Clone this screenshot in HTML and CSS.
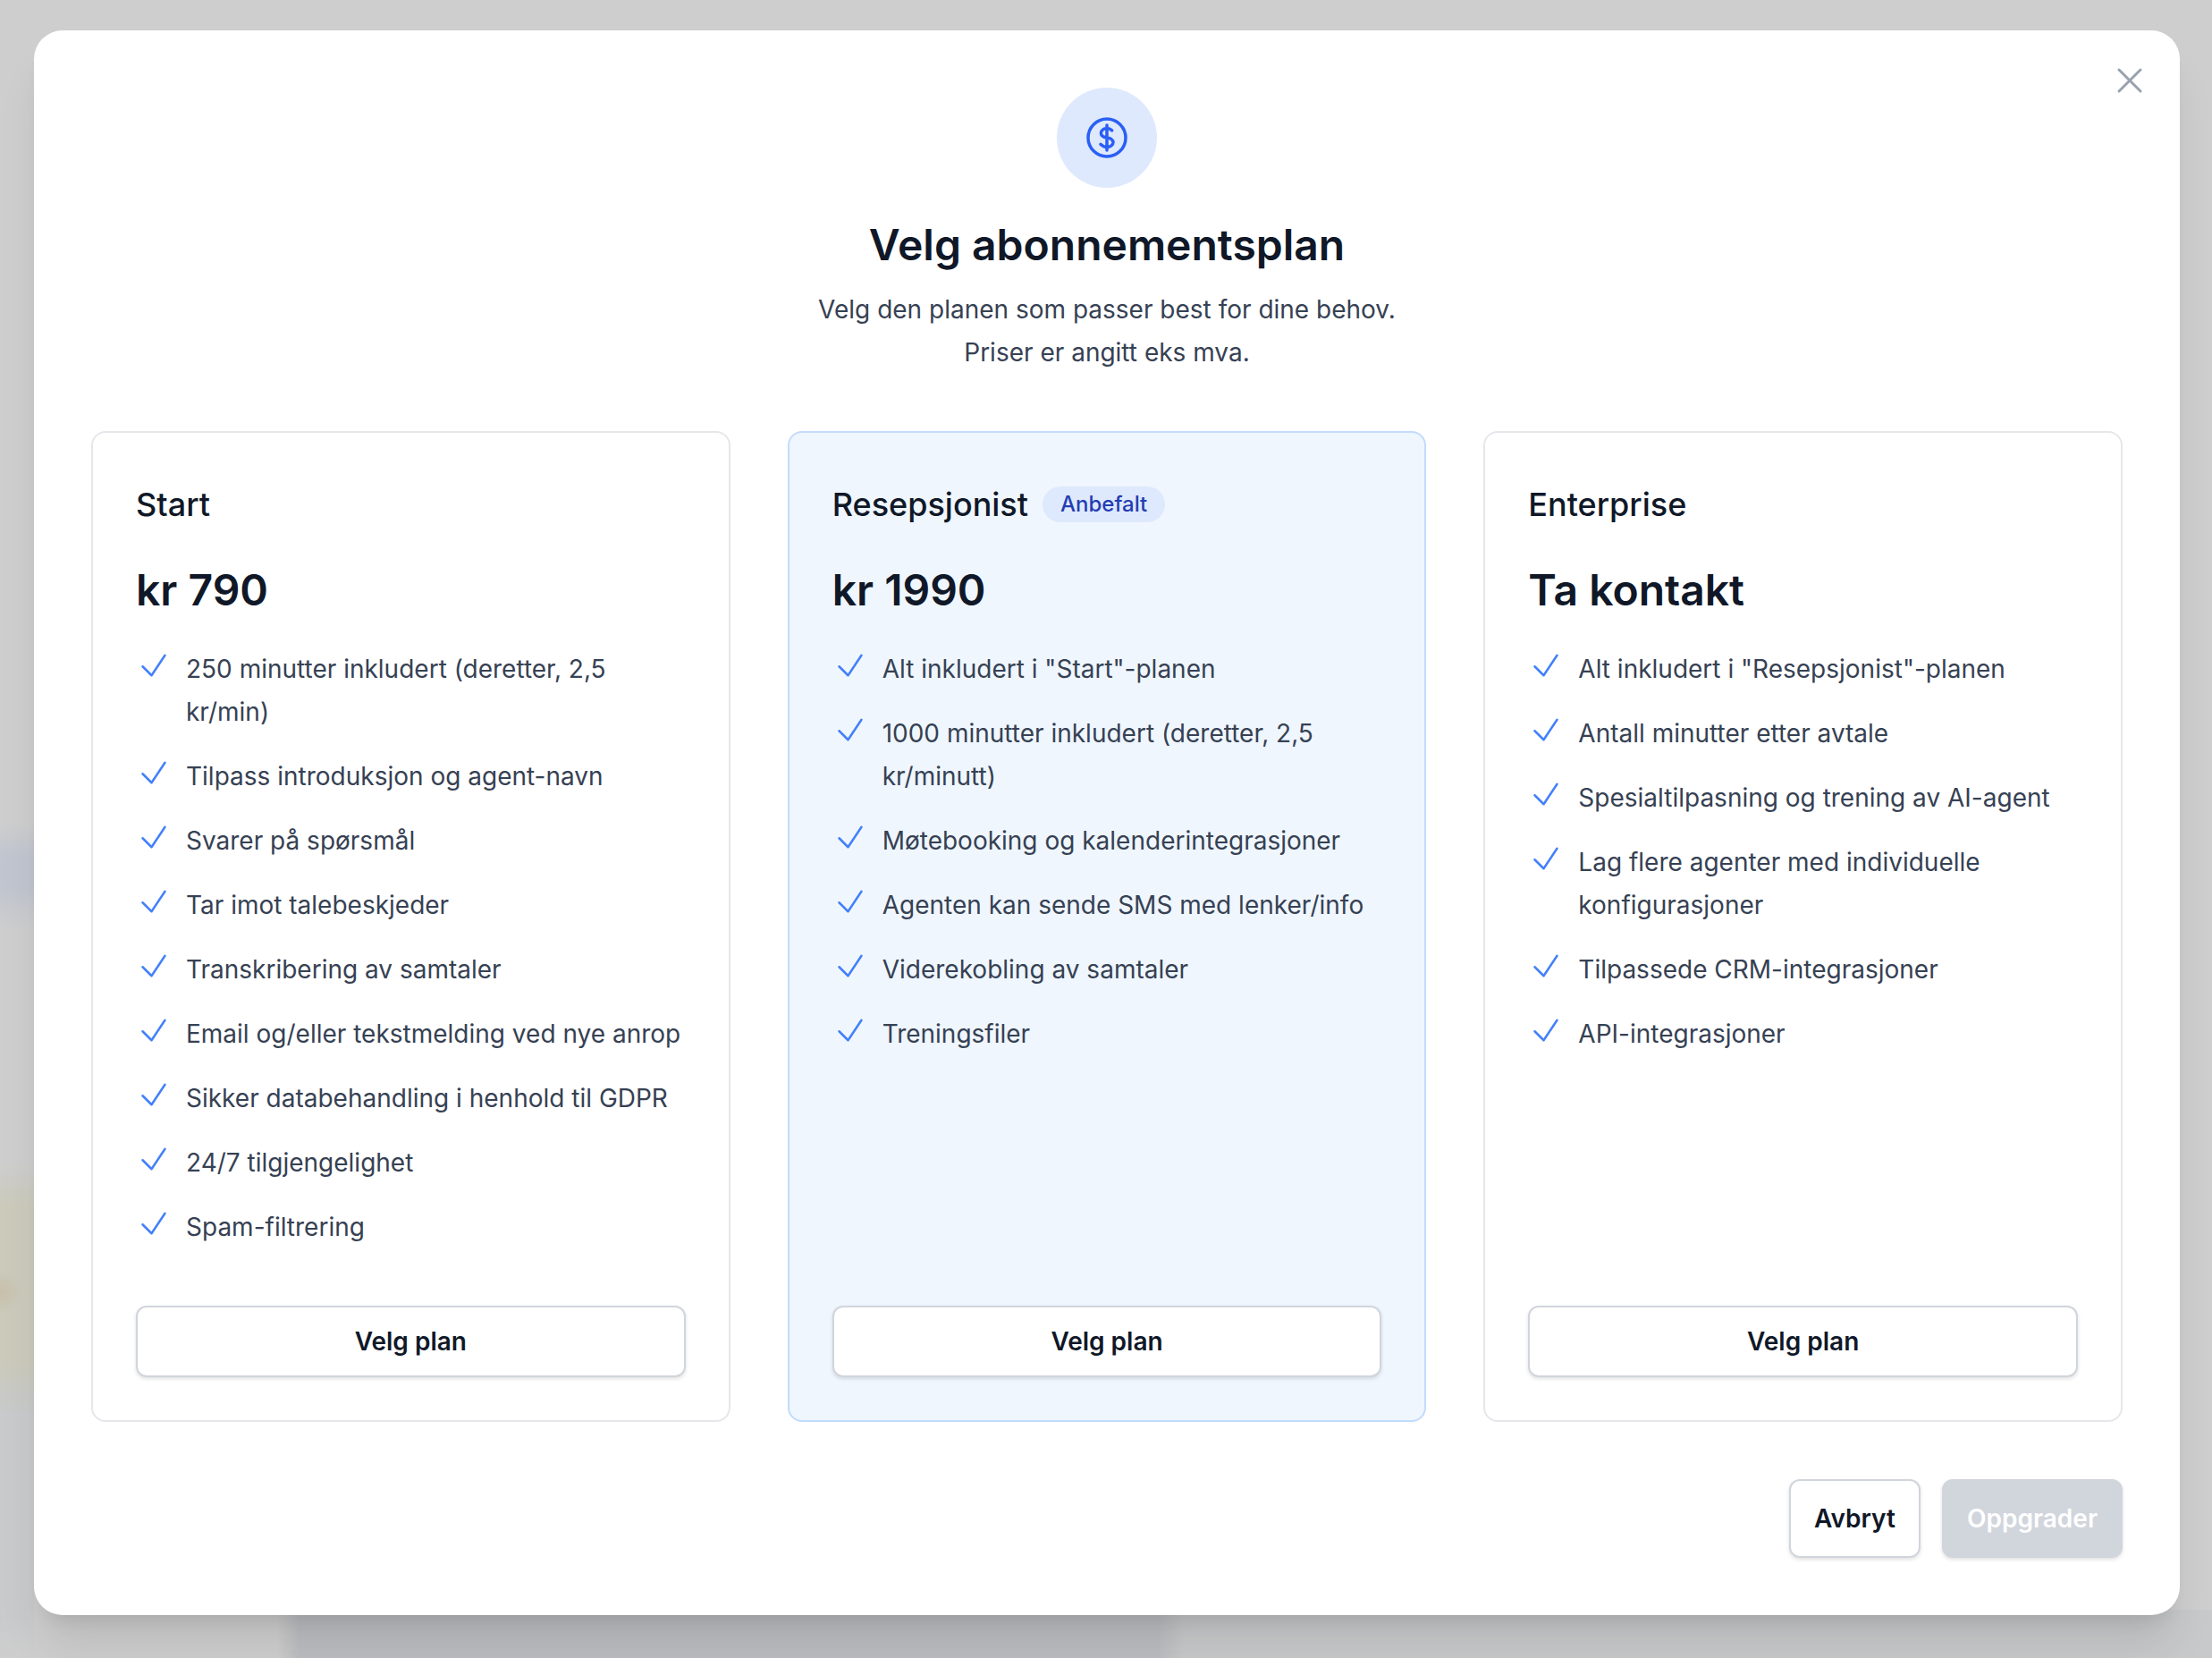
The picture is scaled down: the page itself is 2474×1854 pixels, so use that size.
FILE: index.html
```html
<!DOCTYPE html>
<html lang="no">
<head>
    <meta charset="UTF-8">
    <meta name="viewport" content="width=device-width, initial-scale=1.0">
    <title>Velg abonnementsplan</title>
    <link rel="stylesheet" href="styles.css">
</head>
<body>
    <svg class="sprite" aria-hidden="true">
        <symbol id="check" viewBox="0 0 24 24">
            <path d="M4.5 12.75l6 6 9-13.5" />
        </symbol>
    </svg>

    <div class="backdrop">
        <div class="modal" role="dialog" aria-modal="true" aria-labelledby="modal-title">
            <button type="button" class="close" aria-label="Lukk">
                <svg viewBox="0 0 24 24"><path d="M6 18L18 6M6 6l12 12" /></svg>
            </button>

            <div class="header">
                <div class="header-icon">
                    <svg viewBox="0 0 24 24">
                        <path d="M12 6v12m-3-2.818l.879.659c1.171.879 3.07.879 4.242 0 1.172-.879 1.172-2.303 0-3.182C13.536 12.219 12.768 12 12 12c-.725 0-1.45-.22-2.003-.659-1.106-.879-1.106-2.303 0-3.182s2.9-.879 4.006 0l.415.33M21 12a9 9 0 11-18 0 9 9 0 0118 0z" />
                    </svg>
                </div>
                <h1 id="modal-title">Velg abonnementsplan</h1>
                <p>Velg den planen som passer best for dine behov.<br>Priser er angitt eks mva.</p>
            </div>

            <div class="plans">
                <div class="plan">
                    <h2 class="plan-name">Start</h2>
                    <p class="price">kr 790</p>
                    <ul class="features">
                        <li><svg><use href="#check" /></svg>250 minutter inkludert (deretter, 2,5 kr/min)</li>
                        <li><svg><use href="#check" /></svg>Tilpass introduksjon og agent-navn</li>
                        <li><svg><use href="#check" /></svg>Svarer på spørsmål</li>
                        <li><svg><use href="#check" /></svg>Tar imot talebeskjeder</li>
                        <li><svg><use href="#check" /></svg>Transkribering av samtaler</li>
                        <li><svg><use href="#check" /></svg>Email og/eller tekstmelding ved nye anrop</li>
                        <li><svg><use href="#check" /></svg>Sikker databehandling i henhold til GDPR</li>
                        <li><svg><use href="#check" /></svg>24/7 tilgjengelighet</li>
                        <li><svg><use href="#check" /></svg>Spam-filtrering</li>
                    </ul>
                    <button type="button" class="button">Velg plan</button>
                </div>

                <div class="plan recommended">
                    <h2 class="plan-name">Resepsjonist <span class="badge">Anbefalt</span></h2>
                    <p class="price">kr 1990</p>
                    <ul class="features">
                        <li><svg><use href="#check" /></svg>Alt inkludert i "Start"-planen</li>
                        <li><svg><use href="#check" /></svg>1000 minutter inkludert (deretter, 2,5 kr/minutt)</li>
                        <li><svg><use href="#check" /></svg>Møtebooking og kalenderintegrasjoner</li>
                        <li><svg><use href="#check" /></svg>Agenten kan sende SMS med lenker/info</li>
                        <li><svg><use href="#check" /></svg>Viderekobling av samtaler</li>
                        <li><svg><use href="#check" /></svg>Treningsfiler</li>
                    </ul>
                    <button type="button" class="button">Velg plan</button>
                </div>

                <div class="plan">
                    <h2 class="plan-name">Enterprise</h2>
                    <p class="price">Ta kontakt</p>
                    <ul class="features">
                        <li><svg><use href="#check" /></svg>Alt inkludert i "Resepsjonist"-planen</li>
                        <li><svg><use href="#check" /></svg>Antall minutter etter avtale</li>
                        <li><svg><use href="#check" /></svg>Spesialtilpasning og trening av AI-agent</li>
                        <li><svg><use href="#check" /></svg>Lag flere agenter med individuelle konfigurasjoner</li>
                        <li><svg><use href="#check" /></svg>Tilpassede CRM-integrasjoner</li>
                        <li><svg><use href="#check" /></svg>API-integrasjoner</li>
                    </ul>
                    <button type="button" class="button">Velg plan</button>
                </div>
            </div>

            <div class="footer">
                <button type="button" class="button">Avbryt</button>
                <button type="button" class="button primary" disabled>Oppgrader</button>
            </div>
        </div>
    </div>
</body>
</html>
```
FILE: styles.css
```css
* {
    box-sizing: border-box;
}
body, h1, h2, p, ul {
    margin: 0;
    padding: 0;
}
body {
    font-family: Inter, "Liberation Sans", sans-serif;
    font-size: 28px;
    line-height: 48px;
    color: #364153;
    background-color: #cecece;
}
.sprite {
    display: none;
}
svg {
    display: block;
    fill: none;
    stroke: currentColor;
    stroke-width: 1.5;
    stroke-linecap: round;
    stroke-linejoin: round;
}

/* page behind the dialog, dimmed and blurred */
.backdrop {
    min-height: 100vh;
    padding: 34px 36px 48px 38px;
    overflow: hidden;
    background-image:
        radial-gradient(circle at 0 1445px, #c8bfaa, transparent 24px),
        linear-gradient(transparent 920px, #c0c5cf 960px, #c0c5cf 990px, transparent 1040px),
        linear-gradient(transparent 1300px, #cbcabb 1350px, #cbcabb 1520px, #c8cacb 1580px, #c8cacb 1800px, transparent 1854px),
        linear-gradient(90deg, transparent 310px, #bcbdc0 335px, #bcbdc0 1295px, #c8c9ca 1325px);
    background-size: 38px 100%, 38px 100%, 38px 100%, 100% 54px;
    background-position: 0 0, 0 0, 0 0, 0 100%;
    background-repeat: no-repeat;
}
.modal {
    position: relative;
    padding: 64px;
    background-color: #fff;
    border-radius: 32px;
    box-shadow: 0 40px 50px -10px rgba(0, 0, 0, 0.1), 0 16px 20px -12px rgba(0, 0, 0, 0.1);
}
.close {
    position: absolute;
    top: 32px;
    right: 32px;
    padding: 0;
    border: 0;
    background: none;
    color: #99a1af;
}
.close svg {
    width: 48px;
    height: 48px;
}

.header {
    text-align: center;
}
.header-icon {
    display: flex;
    align-items: center;
    justify-content: center;
    width: 112px;
    height: 112px;
    margin: 0 auto 32px;
    border-radius: 50%;
    background-color: #dee9fd;
    color: #2a5ff6;
}
.header-icon svg {
    width: 56px;
    height: 56px;
}
h1 {
    margin-bottom: 16px;
    font-size: 48px;
    font-weight: 600;
    line-height: 64px;
    color: #101828;
}

.plans {
    display: grid;
    grid-template-columns: repeat(3, 1fr);
    gap: 64px;
    margin: 64px 0;
}
.plan {
    display: flex;
    flex-direction: column;
    padding: 48px;
    border: 2px solid #e5e7eb;
    border-radius: 16px;
}
.recommended {
    background-color: #eff6fe;
    border-color: #c2dbfd;
}
.plan-name {
    display: flex;
    align-items: center;
    gap: 16px;
    font-size: 36px;
    font-weight: 500;
    line-height: 64px;
    color: #101828;
}
.badge {
    padding: 0 20px;
    border-radius: 20px;
    background-color: #dee9fd;
    font-size: 24px;
    line-height: 40px;
    color: #243db2;
}
.price {
    margin: 32px 0;
    font-size: 48px;
    font-weight: 600;
    line-height: 64px;
    color: #101828;
}
.features {
    display: flex;
    flex-direction: column;
    gap: 24px;
    margin-bottom: 64px;
    list-style: none;
}
.features li {
    display: flex;
    gap: 16px;
}
.features svg {
    flex-shrink: 0;
    width: 40px;
    height: 40px;
    color: #4380fa;
}

.button {
    padding: 14px 26px;
    border: 2px solid #d1d5dc;
    border-radius: 12px;
    background-color: #fff;
    box-shadow: 0 2px 4px rgba(0, 0, 0, 0.12);
    font-family: inherit;
    font-size: 28px;
    font-weight: 600;
    line-height: 48px;
    color: #101828;
}
.plan .button {
    margin-top: auto;
}
.primary {
    background-color: #d1d5dc;
    color: #fff;
}
.footer {
    display: flex;
    justify-content: flex-end;
    gap: 24px;
}
.footer .button {
    padding: 18px 26px;
}
```
